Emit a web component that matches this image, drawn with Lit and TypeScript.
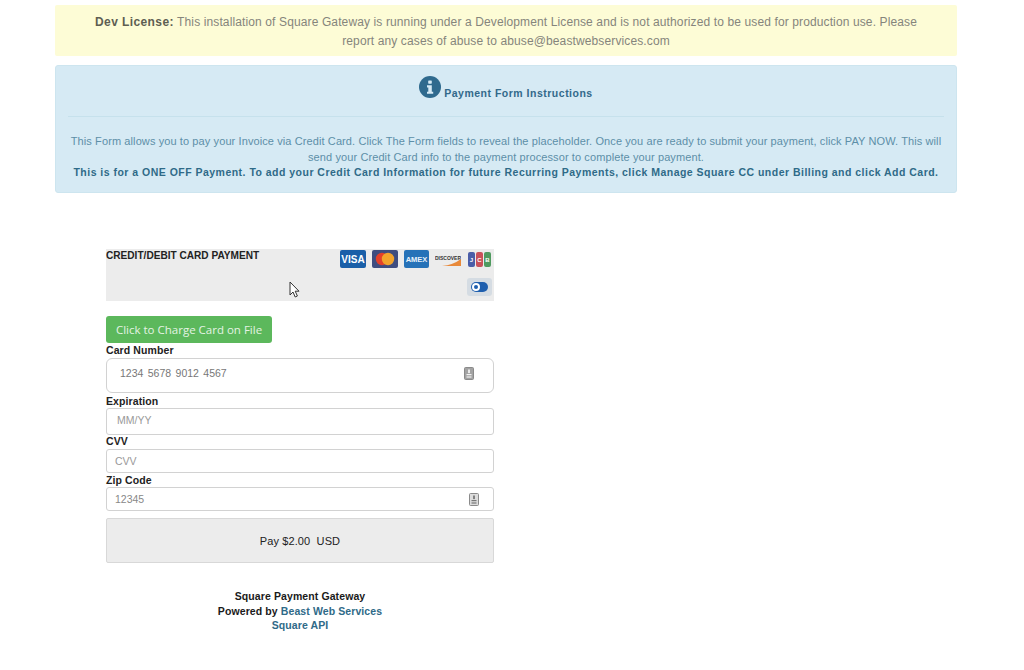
import { LitElement, html, css, svg } from "lit";
import { customElement } from "lit/decorators.js";

const fieldIcon = (bg: string, mark: string) => svg`<svg class="fieldicon" viewBox="0 0 10 13" width="10" height="13"><rect x="0.5" y="0.5" width="9" height="12" rx="1" fill="${bg}" stroke="#8a8a8a"/><rect x="4.1" y="2.5" width="1.8" height="3.6" fill="${mark}"/><rect x="2.5" y="7" width="5" height="1.2" fill="${mark}"/><rect x="2.5" y="9.4" width="5" height="1.2" fill="${mark}"/></svg>`;

@customElement("app-root")
export class AppRoot extends LitElement {
  static styles = css`
    :host { display: block; position: relative; width: 1024px; height: 670px; overflow: hidden; background: #fff; font-family: "Liberation Sans", Arial, sans-serif; }
    .page { padding: 5px 67px 0 55px; display: flex; flex-direction: column; }
    .alert-y { height: 51px; box-sizing: border-box; background: #fdfcd6; color: #85857c; font-size: 12px; letter-spacing: 0.12px; line-height: 19px; text-align: center; padding: 8px 30px 0; border-radius: 2px; }
    .alert-y b { color: #5e5e52; letter-spacing: 0.4px; }
    .alert-b { margin-top: 9px; height: 128px; box-sizing: border-box; background: #d6eaf4; border: 1px solid #cde5ef; border-radius: 3px; color: #5d8fa8; text-align: center; padding: 0 12px; }
    .head { height: 51px; display: flex; justify-content: center; align-items: flex-end; gap: 3px; padding-bottom: 17px; box-sizing: border-box; border-bottom: 1px solid #c6e1ec; font-size: 10.5px; font-weight: bold; color: #32698a; letter-spacing: 0.5px; }
    .head svg { display: block; margin-bottom: 1px; }
    .head span { line-height: 12px; }
    .body { margin-top: 17px; font-size: 11px; line-height: 15.5px; letter-spacing: 0.1px; }
    .body b { font-size: 10.5px; color: #2f6a88; letter-spacing: 0.48px; }
    .form { margin: 56px 0 0 51px; width: 388px; display: flex; flex-direction: column; }
    .cardhead { height: 52px; background: #ececec; display: flex; justify-content: space-between; color: #222; padding-right: 2px; box-sizing: border-box; }
    .cardhead .t { font-size: 10.1px; font-weight: bold; line-height: 14px; }
    .logos { display: flex; flex-direction: column; align-items: flex-end; padding-top: 1px; gap: 10px; }
    .row { display: flex; gap: 6px; }
    .charge { margin-top: 15px; width: 166px; height: 27px; padding-bottom: 1px; box-sizing: border-box; background: #5cb85c; border-radius: 3px; color: #e4f3e4; font-family: "Open Sans", sans-serif; font-size: 11.5px; display: flex; align-items: center; justify-content: center; }
    label { display: block; font-size: 10.5px; font-weight: bold; color: #222; line-height: 12px; letter-spacing: 0.1px; }
    .f { box-sizing: border-box; border: 1px solid #d2d2d2; background: #fff; display: flex; align-items: center; justify-content: space-between; color: #888; font-size: 10.5px; border-radius: 3px; }
    .f1 { height: 35px; margin-top: 2px; border-radius: 6px; padding: 0 19px 5px 13px; color: #777; word-spacing: 1.5px; }
    .f2 { height: 27px; margin-top: 1px; padding: 0 10px 4px; color: #999; }
    .f3 { height: 24px; margin-top: 2px; padding: 0 8px; color: #999; }
    .f4 { height: 24px; margin-top: 1px; padding: 0 14px 0 8px; }
    .lb0, .lb3 { margin-top: 1px; }
    .lb1 { margin-top: 2px; }
    .pay { margin-top: 7px; height: 45px; box-sizing: border-box; background: #ececec; border: 1px solid #d8d8d8; border-radius: 2px; font-size: 11px; color: #222; display: flex; align-items: center; justify-content: center; white-space: pre; letter-spacing: 0.1px; }
    .foot { margin-top: 26px; text-align: center; font-size: 10.5px; font-weight: bold; line-height: 14.5px; color: #1a1a1a; letter-spacing: 0.1px; }
    .foot a { color: #2f6a88; text-decoration: none; }
    .cursor { position: absolute; left: 289px; top: 281px; }
  `;

  render() {
    return html`
      <div class="page">
        <div class="alert-y"><b>Dev License:</b> This installation of Square Gateway is running under a Development License and is not authorized to be used for production use. Please report any cases of abuse to abuse@beastwebservices.com</div>
        <div class="alert-b">
          <div class="head">
            <svg width="22" height="22" viewBox="0 0 22 22"><circle cx="11" cy="11" r="11" fill="#2f6a8e"/><rect x="9.2" y="4.5" width="3.6" height="3.2" rx=".6" fill="#d6eaf5"/><path d="M8 9.3h4.8v6.4h1.4v2.1H8v-2.1h1.3v-4.3H8z" fill="#d6eaf5"/></svg>
            <span>Payment Form Instructions</span>
          </div>
          <div class="body">This Form allows you to pay your Invoice via Credit Card. Click The Form fields to reveal the placeholder. Once you are ready to submit your payment, click PAY NOW. This will send your Credit Card info to the payment processor to complete your payment.<br><b>This is for a ONE OFF Payment. To add your Credit Card Information for future Recurring Payments, click Manage Square CC under Billing and click Add Card.</b></div>
        </div>
        <div class="form">
          <div class="cardhead">
            <span class="t">CREDIT/DEBIT CARD PAYMENT</span>
            <div class="logos">
              <div class="row">
                <svg width="26" height="18" viewBox="0 0 26 18"><rect width="26" height="18" rx="2" fill="#1a5fa8"/><text x="13" y="13" font-family="Liberation Sans" font-size="10" font-weight="bold" fill="#fff" text-anchor="middle">VISA</text></svg>
                <svg width="26" height="18" viewBox="0 0 26 18"><rect width="26" height="18" rx="2" fill="#3f4d80"/><circle cx="10" cy="9" r="6.2" fill="#e3402a"/><circle cx="16" cy="9" r="6.2" fill="#f2a32c"/></svg>
                <svg width="25" height="18" viewBox="0 0 25 18"><rect width="25" height="18" rx="2" fill="#2672b8"/><text x="12.5" y="11.5" font-family="Liberation Sans" font-size="7.5" font-weight="bold" fill="#e8f1fa" text-anchor="middle">AMEX</text></svg>
                <svg width="26" height="18" viewBox="0 0 26 18"><rect width="26" height="18" rx="1" fill="#ececec"/><text x="13" y="9.5" font-family="Liberation Sans" font-size="5" font-weight="bold" fill="#333" text-anchor="middle">DISCOVER</text><path d="M7 16 Q18 15 26 9V16z" fill="#e8893a"/></svg>
                <svg width="25" height="18" viewBox="0 0 25 18"><rect x="1" y="2" width="7" height="15" rx="2" fill="#4a5da8"/><rect x="9" y="2" width="7" height="15" rx="2" fill="#c9515a"/><rect x="17" y="2" width="7" height="15" rx="2" fill="#4f9a5f"/><text x="4.5" y="12" font-family="Liberation Sans" font-size="6" font-weight="bold" fill="#fff" text-anchor="middle">J</text><text x="12.5" y="12" font-family="Liberation Sans" font-size="6" font-weight="bold" fill="#fff" text-anchor="middle">C</text><text x="20.5" y="12" font-family="Liberation Sans" font-size="6" font-weight="bold" fill="#fff" text-anchor="middle">B</text></svg>
              </div>
              <svg width="25" height="18" viewBox="0 0 25 18"><rect width="25" height="18" rx="3" fill="#d5dce3"/><rect x="4" y="4" width="17" height="10" rx="5" fill="#1f5fae"/><circle cx="9" cy="9" r="4" fill="#fff"/><circle cx="9" cy="9" r="2" fill="#1f5fae"/></svg>
            </div>
          </div>
          <div class="charge">Click to Charge Card on File</div>
          <label class="lb0">Card Number</label>
          <div class="f f1"><span>1234 5678 9012 4567</span>${fieldIcon("#a3a3a3", "#f2f2f2")}</div>
          <label class="lb1">Expiration</label>
          <div class="f f2"><span>MM/YY</span></div>
          <label>CVV</label>
          <div class="f f3"><span>CVV</span></div>
          <label class="lb3">Zip Code</label>
          <div class="f f4"><span>12345</span>${fieldIcon("#dcdcdc", "#777")}</div>
          <div class="pay">Pay $2.00  USD</div>
          <div class="foot">Square Payment Gateway<br>Powered by <a>Beast Web Services</a><br><a>Square API</a></div>
        </div>
      </div>
      <svg class="cursor" width="12" height="17" viewBox="0 0 12 17"><path d="M1 1v13l3-3 2.2 5 2.2-1-2.2-4.8H10z" fill="#fff" stroke="#333" stroke-width="1"/></svg>
    `;
  }
}
